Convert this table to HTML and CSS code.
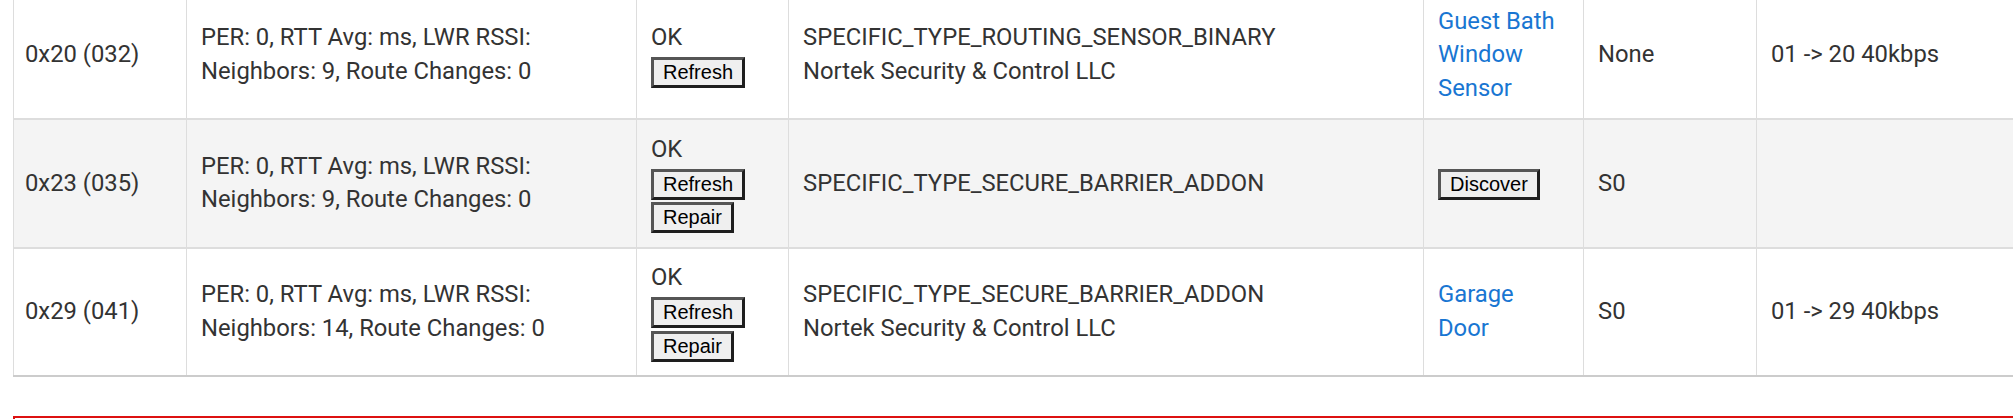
FILE: index.html
```html
<!DOCTYPE html>
<html lang="en">
<head>
<meta charset="utf-8">
<title>Z-Wave Details</title>
<link rel="stylesheet" href="styles.css">
</head>
<body>
<div class="page">
  <div class="table-wrap">
    <table class="nodes">
      <colgroup>
        <col class="c-id">
        <col class="c-stats">
        <col class="c-status">
        <col class="c-type">
        <col class="c-device">
        <col class="c-sec">
        <col class="c-route">
      </colgroup>
      <tbody>
        <tr>
          <td class="id-cell">0x20 (032)</td>
          <td>PER: 0, RTT Avg: ms, LWR RSSI:<br>Neighbors: 9, Route Changes: 0</td>
          <td>OK<br><button class="btn">Refresh</button></td>
          <td>SPECIFIC_TYPE_ROUTING_SENSOR_BINARY<br>Nortek Security &amp; Control LLC</td>
          <td class="dev-cell"><a href="#" class="dev-link">Guest Bath Window Sensor</a></td>
          <td>None</td>
          <td>01 -&gt; 20 40kbps</td>
        </tr>
        <tr class="striped">
          <td class="id-cell">0x23 (035)</td>
          <td>PER: 0, RTT Avg: ms, LWR RSSI:<br>Neighbors: 9, Route Changes: 0</td>
          <td>OK<br><button class="btn">Refresh</button><br><button class="btn">Repair</button></td>
          <td>SPECIFIC_TYPE_SECURE_BARRIER_ADDON</td>
          <td class="dev-cell"><button class="btn">Discover</button></td>
          <td>S0</td>
          <td></td>
        </tr>
        <tr>
          <td class="id-cell">0x29 (041)</td>
          <td>PER: 0, RTT Avg: ms, LWR RSSI:<br>Neighbors: 14, Route Changes: 0</td>
          <td>OK<br><button class="btn">Refresh</button><br><button class="btn">Repair</button></td>
          <td>SPECIFIC_TYPE_SECURE_BARRIER_ADDON<br>Nortek Security &amp; Control LLC</td>
          <td class="dev-cell"><a href="#" class="dev-link">Garage Door</a></td>
          <td>S0</td>
          <td>01 -&gt; 29 40kbps</td>
        </tr>
      </tbody>
    </table>
  </div>
  <div class="alert-box"></div>
</div>
</body>
</html>
```

FILE: styles.css
```css
html, body {
  margin: 0;
  padding: 0;
  background: #ffffff;
}

body {
  font-family: Roboto, "Liberation Sans", Arial, sans-serif;
  font-size: 23.8px;
  line-height: 33.75px;
  color: #333333;
  overflow: hidden;
}

.page {
  padding-left: 13px;
  overflow: hidden;
}

.table-wrap {
  margin-top: -10px;
}

.nodes {
  border-collapse: collapse;
  table-layout: fixed;
  width: 2200px;
  border-left: 1px solid #dddddd;
  border-bottom: 2px solid #cccccc;
}

.c-id { width: 173px; }
.c-stats { width: 450px; }
.c-status { width: 152px; }
.c-type { width: 635px; }
.c-device { width: 160px; }
.c-sec { width: 173px; }
.c-route { width: 457px; }

.nodes td {
  padding: 12.5px 16px 12.5px 14px;
  vertical-align: middle;
  text-align: left;
  border-top: 2px solid #dddddd;
  border-left: 1px solid #dddddd;
  border-right: 1px solid #dddddd;
  white-space: nowrap;
}

.nodes .id-cell {
  padding-left: 11px;
}

.nodes .dev-cell {
  white-space: normal;
}

.striped td {
  background: #f4f4f4;
}

.dev-link {
  color: #1976d2;
  text-decoration: none;
}

.btn {
  font-family: "Liberation Sans", Arial, sans-serif;
  font-size: 20px;
  line-height: 23px;
  color: #000000;
  background: #efefef;
  padding: 1px 9px;
  margin: 0;
  border: 3px solid;
  border-color: #555555 #1e1e1e #1e1e1e #555555;
  border-radius: 0;
}

.alert-box {
  margin-top: 39px;
  height: 60px;
  border: 2px solid #dd1111;
  border-right: none;
}
```
